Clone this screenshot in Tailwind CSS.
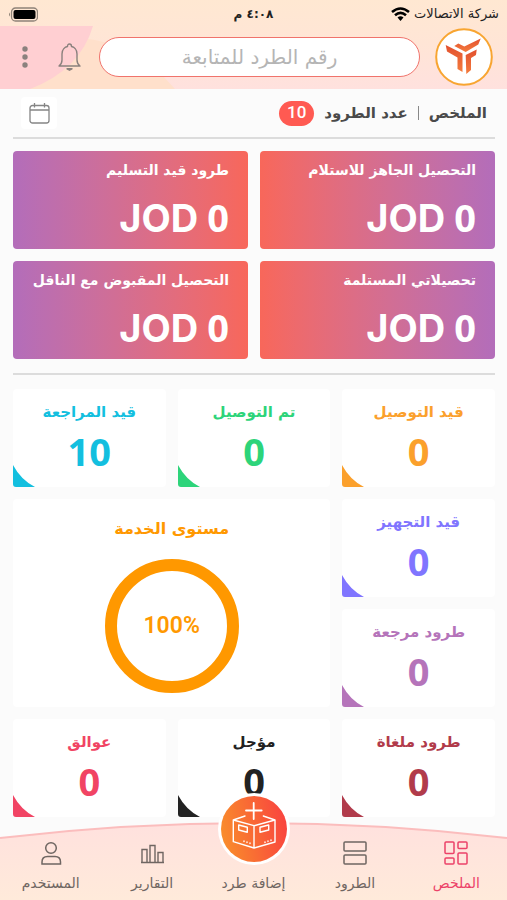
<!DOCTYPE html>
<html lang="ar" dir="rtl">
<head>
<meta charset="utf-8">
<meta name="viewport" content="width=device-width, initial-scale=1">
<title>الملخص</title>
<script src="https://cdn.jsdelivr.net/npm/@tailwindcss/browser@4"></script>
</head>
<body class="flex h-screen flex-col overflow-hidden bg-[#fbfbfb] font-['DejaVu_Sans',sans-serif] text-[#4a4a4a]">

<header class="relative shrink-0 overflow-hidden bg-linear-to-b from-[#ffe8d2] via-[#ffe5d6] to-[#ffe1de]">
  <svg class="absolute inset-0 h-full w-full" viewBox="0 0 507 89" preserveAspectRatio="none" aria-hidden="true">
    <path d="M0 26H80V38Q135 42 175 89H0Z" fill="#ffe0cb"/>
    <path d="M0 26H93Q80 70 30 89H0Z" fill="#ffcfd2"/>
  </svg>
  <div class="relative flex h-7 items-center justify-between px-2 text-[12px] text-[#222]">
    <div class="flex flex-1 items-center gap-1">
      <span class="text-[13px]">شركة الاتصالات</span>
      <svg class="h-[14px] w-[19px]" viewBox="0 0 19 14" fill="none" stroke="#000" stroke-width="2.6" aria-hidden="true">
        <path d="M1 5Q9.500-2 18 5M4 8.300Q9.500 3.500 15 8.300"/><path d="M6.500 10.500Q9.500 8 12.500 10.500L9.500 14Z" fill="#000" stroke="none"/>
      </svg>
    </div>
    <span class="font-bold">٤:٠٨ م</span>
    <div class="flex flex-1 justify-end">
      <svg class="h-[15px] w-[30px]" viewBox="0 0 30 15" aria-hidden="true">
        <rect x="3.500" y="1" width="26" height="13" rx="4" fill="none" stroke="#8f8378" stroke-width="1.300"/>
        <rect x="5.500" y="3" width="22" height="9" rx="2" fill="#000"/><path d="M2 5.500Q0 7.500 2 9.500Z" fill="#8f8378"/>
      </svg>
    </div>
  </div>
  <div class="relative flex h-[61px] items-center pr-[14px] pb-1 pl-4">
    <a href="#" aria-label="الرئيسية" class="shrink-0">
      <svg class="h-[58px] w-[58px]" viewBox="0 0 58 58">
        <defs><linearGradient id="logo" x1="0" y1="0" x2="0" y2="1"><stop offset="0" stop-color="#e2502f"/><stop offset="1" stop-color="#f47b3c"/></linearGradient></defs>
        <circle cx="29" cy="29" r="27.800" fill="#fff" stroke="#f8a531" stroke-width="2"/>
        <g fill="url(#logo)">
          <path d="M10.700 17L27.500 25.500V44L22.500 41V29.500L12 23.500Z"/>
          <path d="M19.300 18L23.300 15.500L29.300 18.500L45.700 10.500L43.300 16.500L30.700 24Z"/>
          <path d="M30.700 27L41.700 21.500L41 27L36 30V42L31.300 46Z"/>
        </g>
      </svg>
    </a>
    <input type="text" aria-label="رقم الطرد للمتابعة" placeholder="رقم الطرد للمتابعة" class="mr-[15px] h-10 min-w-0 flex-1 rounded-full border border-[#f0736c] bg-white text-center text-[20px] placeholder:text-[#b5b5b5]">
    <button type="button" aria-label="الإشعارات" class="mr-[18px]">
      <svg class="h-7 w-[23px]" viewBox="0 0 23 28" fill="none" stroke="#8b817e" stroke-width="1.400" stroke-linecap="round" stroke-linejoin="round">
        <path d="M1 23C3 21.500 4 20 4 17V11C4 6.500 7 4 9.500 3.500Q9.500 1 11.500 1T13.500 3.500C16 4 19 6.500 19 11V17C19 20 20 21.500 22 23Z"/><path d="M9 25.800H14L11.500 27.200Z" fill="#8b817e"/>
      </svg>
    </button>
    <button type="button" aria-label="المزيد" class="mr-6">
      <svg class="h-6 w-[18px]" viewBox="0 0 18 24" fill="#8b817e"><circle cx="9" cy="4" r="2.700"/><circle cx="9" cy="12" r="2.700"/><circle cx="9" cy="20" r="2.700"/></svg>
    </button>
  </div>
</header>

<main class="min-h-0 flex-1 overflow-hidden pr-3 pl-[13px]">
  <div class="flex h-[50px] items-center border-b-2 border-[#dcdcdc] px-2">
    <h1 class="text-[15px] font-bold">الملخص</h1>
    <span class="mx-[10px] h-[14px] w-px bg-[#888]"></span>
    <span class="text-[15px] font-bold">عدد الطرود</span>
    <span class="mr-[10px] flex h-[25px] w-[35px] items-center justify-center rounded-full bg-[#ff5a52] font-[Roboto] text-[17px] font-medium text-white">10</span>
    <button type="button" aria-label="التاريخ" class="mr-auto flex h-8 w-9 items-center justify-center rounded bg-white">
      <svg class="h-[21px] w-[21px]" viewBox="0 0 21 21" fill="none" stroke="#858585" stroke-width="1.300"><rect x="1" y="2.500" width="19" height="17.500" rx="2.500"/><path d="M1 7H20M5.500 0V4.500M15.500 0V4.500"/></svg>
    </button>
  </div>

  <section class="grid grid-cols-2 gap-3 border-b-2 border-[#dcdcdc] pt-3 pb-[14px] text-white">
    <article class="h-[98px] rounded bg-linear-to-r from-[#f8675a] to-[#b36dba] px-[19px] pt-2">
      <h2 class="text-[14px] leading-[22px] font-bold">التحصيل الجاهز للاستلام</h2>
      <p dir="ltr" class="mt-3 text-right font-[Inter] text-[38px] leading-12 font-bold"><span>JOD</span> <span class="font-['Open_Sans']">0</span></p>
    </article>
    <article class="h-[98px] rounded bg-linear-to-l from-[#f8675a] to-[#b36dba] px-[19px] pt-2">
      <h2 class="text-[14px] leading-[22px] font-bold">طرود قيد التسليم</h2>
      <p dir="ltr" class="mt-3 text-right font-[Inter] text-[38px] leading-12 font-bold"><span>JOD</span> <span class="font-['Open_Sans']">0</span></p>
    </article>
    <article class="h-[98px] rounded bg-linear-to-r from-[#f8675a] to-[#b36dba] px-[19px] pt-2">
      <h2 class="text-[14px] leading-[22px] font-bold">تحصيلاتي المستلمة</h2>
      <p dir="ltr" class="mt-3 text-right font-[Inter] text-[38px] leading-12 font-bold"><span>JOD</span> <span class="font-['Open_Sans']">0</span></p>
    </article>
    <article class="h-[98px] rounded bg-linear-to-l from-[#f8675a] to-[#b36dba] px-[19px] pt-2">
      <h2 class="text-[14px] leading-[22px] font-bold">التحصيل المقبوض مع الناقل</h2>
      <p dir="ltr" class="mt-3 text-right font-[Inter] text-[38px] leading-12 font-bold"><span>JOD</span> <span class="font-['Open_Sans']">0</span></p>
    </article>
  </section>

  <section class="grid auto-rows-[98px] grid-cols-3 gap-3 pt-[14px] text-center">
    <article class="relative rounded bg-white pt-[11px] text-[#fba02c]">
      <h2 class="text-[15px] leading-6 font-bold">قيد التوصيل</h2>
      <p class="mt-[2px] font-['Noto_Sans'] text-[38px] leading-[50px] font-bold">0</p>
      <svg class="absolute bottom-0 left-0 h-[22px] w-[22px]" viewBox="0 0 22 22" fill="currentColor" aria-hidden="true"><path d="M0 0Q8 15 22 22H3Q0 22 0 19Z"/></svg>
    </article>
    <article class="relative rounded bg-white pt-[11px] text-[#2dd47a]">
      <h2 class="text-[15px] leading-6 font-bold">تم التوصيل</h2>
      <p class="mt-[2px] font-['Noto_Sans'] text-[38px] leading-[50px] font-bold">0</p>
      <svg class="absolute bottom-0 left-0 h-[22px] w-[22px]" viewBox="0 0 22 22" fill="currentColor" aria-hidden="true"><path d="M0 0Q8 15 22 22H3Q0 22 0 19Z"/></svg>
    </article>
    <article class="relative rounded bg-white pt-[11px] text-[#13bfdf]">
      <h2 class="text-[15px] leading-6 font-bold">قيد المراجعة</h2>
      <p class="mt-[2px] font-['Noto_Sans'] text-[38px] leading-[50px] font-bold">10</p>
      <svg class="absolute bottom-0 left-0 h-[22px] w-[22px]" viewBox="0 0 22 22" fill="currentColor" aria-hidden="true"><path d="M0 0Q8 15 22 22H3Q0 22 0 19Z"/></svg>
    </article>
    <article class="relative rounded bg-white pt-[11px] text-[#8075ff]">
      <h2 class="text-[15px] leading-6 font-bold">قيد التجهيز</h2>
      <p class="mt-[2px] font-['Noto_Sans'] text-[38px] leading-[50px] font-bold">0</p>
      <svg class="absolute bottom-0 left-0 h-[22px] w-[22px]" viewBox="0 0 22 22" fill="currentColor" aria-hidden="true"><path d="M0 0Q8 15 22 22H3Q0 22 0 19Z"/></svg>
    </article>
    <article class="col-span-2 row-span-2 flex flex-col items-center rounded bg-white pt-[18px] text-[#ff9800]">
      <h2 class="text-[16px] leading-6 font-bold">مستوى الخدمة</h2>
      <div class="mt-[18px] flex h-[134px] w-[134px] items-center justify-center rounded-full border-[12px] border-[#ff9800] font-[Roboto] text-[23px] font-semibold" dir="ltr">100%</div>
    </article>
    <article class="relative rounded bg-white pt-[11px] text-[#b574ba]">
      <h2 class="text-[15px] leading-6 font-bold">طرود مرجعة</h2>
      <p class="mt-[2px] font-['Noto_Sans'] text-[38px] leading-[50px] font-bold">0</p>
      <svg class="absolute bottom-0 left-0 h-[22px] w-[22px]" viewBox="0 0 22 22" fill="currentColor" aria-hidden="true"><path d="M0 0Q8 15 22 22H3Q0 22 0 19Z"/></svg>
    </article>
    <article class="relative rounded bg-white pt-[11px] text-[#b13b4b]">
      <h2 class="text-[15px] leading-6 font-bold">طرود ملغاة</h2>
      <p class="mt-[2px] font-['Noto_Sans'] text-[38px] leading-[50px] font-bold">0</p>
      <svg class="absolute bottom-0 left-0 h-[22px] w-[22px]" viewBox="0 0 22 22" fill="currentColor" aria-hidden="true"><path d="M0 0Q8 15 22 22H3Q0 22 0 19Z"/></svg>
    </article>
    <article class="relative rounded bg-white pt-[11px] text-[#222]">
      <h2 class="text-[15px] leading-6 font-bold">مؤجل</h2>
      <p class="mt-[2px] font-['Noto_Sans'] text-[38px] leading-[50px] font-bold">0</p>
      <svg class="absolute bottom-0 left-0 h-[22px] w-[22px]" viewBox="0 0 22 22" fill="currentColor" aria-hidden="true"><path d="M0 0Q8 15 22 22H3Q0 22 0 19Z"/></svg>
    </article>
    <article class="relative rounded bg-white pt-[11px] text-[#f14464]">
      <h2 class="text-[15px] leading-6 font-bold">عوالق</h2>
      <p class="mt-[2px] font-['Noto_Sans'] text-[38px] leading-[50px] font-bold">0</p>
      <svg class="absolute bottom-0 left-0 h-[22px] w-[22px]" viewBox="0 0 22 22" fill="currentColor" aria-hidden="true"><path d="M0 0Q8 15 22 22H3Q0 22 0 19Z"/></svg>
    </article>
  </section>
</main>

<nav class="relative h-[78px] shrink-0 text-[14px] text-[#6f6662]">
  <svg class="absolute inset-0 h-full w-full" viewBox="0 0 507 78" preserveAspectRatio="none" aria-hidden="true">
    <defs><linearGradient id="bar" x1="0" y1="0" x2="0" y2="1"><stop offset="0" stop-color="#ffe1de"/><stop offset="1" stop-color="#ffeada"/></linearGradient></defs>
    <path d="M0 16Q253-14 507 16V78H0Z" fill="url(#bar)"/><path d="M0 16Q253-14 507 16" fill="none" stroke="#fbbdbd" stroke-width="2"/>
  </svg>
  <div class="relative grid h-full grid-cols-5">
    <a href="#" aria-current="page" class="flex flex-col items-center pt-[18px] text-[#ec4268]">
      <svg class="h-[26px] w-[26px]" viewBox="0 0 26 26" fill="none" stroke="currentColor" stroke-width="1.500"><rect x="2" y="2" width="9" height="11.500" rx="1"/><rect x="15" y="2" width="9" height="6.500" rx="1"/><rect x="2" y="18" width="9" height="6" rx="1"/><rect x="15" y="13" width="9" height="11" rx="1"/></svg>
      <span class="mt-[7px] leading-5">الملخص</span>
    </a>
    <a href="#" class="flex flex-col items-center pt-[18px]">
      <svg class="h-[26px] w-[26px]" viewBox="0 0 26 26" fill="none" stroke="currentColor" stroke-width="1.500"><rect x="2" y="2" width="22" height="9" rx="1"/><rect x="2" y="15" width="22" height="9" rx="1"/></svg>
      <span class="mt-[7px] leading-5">الطرود</span>
    </a>
    <a href="#" class="relative flex flex-col items-center pt-[51px]">
      <svg class="absolute -top-[30px] h-[74px] w-[74px]" viewBox="0 0 74 74">
        <defs><linearGradient id="add" x1="0" y1="0.600" x2="1" y2="0.400"><stop offset="0" stop-color="#f98d2b"/><stop offset="1" stop-color="#f9443f"/></linearGradient></defs>
        <circle cx="37" cy="37" r="36" fill="#fff"/><circle cx="37" cy="37" r="33" fill="url(#add)"/>
        <g fill="none" stroke="#fff" stroke-width="1.400" stroke-linejoin="round" stroke-linecap="round">
          <path d="M36.700 11V27M29 18.500H44.700" stroke-width="1.800"/>
          <path d="M28 24L16.300 28L37 33.700L58 28L46.300 24M16.300 28V49.700L37 56L58 50V28M37 33.700V56"/>
          <path d="M21.700 33L30.300 35.300V40.300L21.700 38ZM51.700 33L43 35.300V40.300L51.700 38Z"/>
          <path d="M27 49V49.500M30 50V50.500M33 51V51.500M48 50V50.500M51 49V49.500M54 48V48.500"/>
        </g>
      </svg>
      <span class="leading-5">إضافة طرد</span>
    </a>
    <a href="#" class="flex flex-col items-center pt-[18px]">
      <svg class="h-[26px] w-[26px]" viewBox="0 0 26 26" fill="none" stroke="currentColor" stroke-width="1.400"><path d="M3 22.500V9.500H8V22.500ZM11 22.500V5.500H16V22.500ZM19 22.500V12.500H24V22.500ZM2 22.500H25"/></svg>
      <span class="mt-[7px] leading-5">التقارير</span>
    </a>
    <a href="#" class="flex flex-col items-center pt-[18px]">
      <svg class="h-[26px] w-[26px]" viewBox="0 0 26 26" fill="none" stroke="currentColor" stroke-width="1.500"><circle cx="13" cy="8" r="5.300"/><path d="M4 24V22Q4 16.500 9.500 16.500H17Q22.500 16.500 22.500 22V24Z"/></svg>
      <span class="mt-[7px] leading-5">المستخدم</span>
    </a>
  </div>
</nav>
</body>
</html>
